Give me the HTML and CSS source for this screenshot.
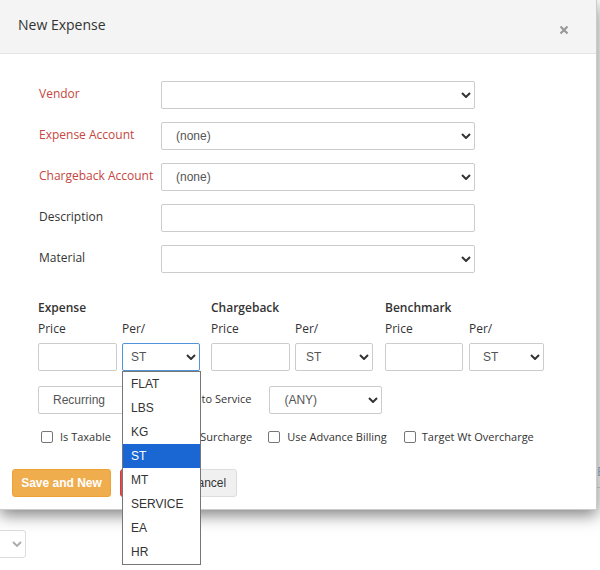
FILE: index.html
```html
<!DOCTYPE html>
<html>
<head>
<meta charset="utf-8">
<link rel="stylesheet" href="styles.css">
</head>
<body>
<div class="page">
  <div class="page-tabs">E</div>
  <div class="page-select"><svg class="chev" viewBox="0 0 10 6" width="10" height="6"><path d="M1 1l4 4 4-4" fill="none" stroke="currentColor" stroke-width="1.8"/></svg></div>
</div>

<div class="modal">
  <div class="modal-header">
    <h4 class="modal-title">New Expense</h4>
    <span class="close"><svg viewBox="0 0 10 10" width="10" height="10"><path d="M1.5 1.5l7 7M8.5 1.5l-7 7" fill="none" stroke="currentColor" stroke-width="2.2"/></svg></span>
  </div>
  <div class="modal-body">
    <div class="form-rows">
      <div class="form-row">
        <span class="form-label req">Vendor</span>
        <div class="control"><span></span><svg class="chev" viewBox="0 0 10 6" width="10" height="6"><path d="M1 1l4 4 4-4" fill="none" stroke="currentColor" stroke-width="2"/></svg></div>
      </div>
      <div class="form-row">
        <span class="form-label req">Expense Account</span>
        <div class="control"><span>(none)</span><svg class="chev" viewBox="0 0 10 6" width="10" height="6"><path d="M1 1l4 4 4-4" fill="none" stroke="currentColor" stroke-width="2"/></svg></div>
      </div>
      <div class="form-row">
        <span class="form-label req">Chargeback Account</span>
        <div class="control"><span>(none)</span><svg class="chev" viewBox="0 0 10 6" width="10" height="6"><path d="M1 1l4 4 4-4" fill="none" stroke="currentColor" stroke-width="2"/></svg></div>
      </div>
      <div class="form-row">
        <span class="form-label">Description</span>
        <div class="control"></div>
      </div>
      <div class="form-row">
        <span class="form-label">Material</span>
        <div class="control"><span></span><svg class="chev" viewBox="0 0 10 6" width="10" height="6"><path d="M1 1l4 4 4-4" fill="none" stroke="currentColor" stroke-width="2"/></svg></div>
      </div>
    </div>

    <div class="prices">
      <div class="pgroup">
        <div class="pg-head">Expense</div>
        <div class="pg-label">Price</div>
        <div class="pg-label">Per/</div>
        <div class="pg-input"></div>
        <div class="per-wrap">
          <div class="pg-select focused pad-8"><span>ST</span><svg class="chev" viewBox="0 0 10 6" width="10" height="6"><path d="M1 1l4 4 4-4" fill="none" stroke="currentColor" stroke-width="2"/></svg></div>
          <ul class="dropdown">
            <li>FLAT</li>
            <li>LBS</li>
            <li>KG</li>
            <li class="selected">ST</li>
            <li>MT</li>
            <li>SERVICE</li>
            <li>EA</li>
            <li>HR</li>
          </ul>
        </div>
      </div>
      <div class="pgroup g2">
        <div class="pg-head">Chargeback</div>
        <div class="pg-label">Price</div>
        <div class="pg-label">Per/</div>
        <div class="pg-input"></div>
        <div class="pg-select pad-10"><span>ST</span><svg class="chev" viewBox="0 0 10 6" width="10" height="6"><path d="M1 1l4 4 4-4" fill="none" stroke="currentColor" stroke-width="2"/></svg></div>
      </div>
      <div class="pgroup g3">
        <div class="pg-head">Benchmark</div>
        <div class="pg-label">Price</div>
        <div class="pg-label">Per/</div>
        <div class="pg-input"></div>
        <div class="pg-select pad-14"><span>ST</span><svg class="chev" viewBox="0 0 10 6" width="10" height="6"><path d="M1 1l4 4 4-4" fill="none" stroke="currentColor" stroke-width="2"/></svg></div>
      </div>
    </div>

    <div class="options-row">
      <div class="recurring">Recurring</div>
      <span class="apply-label">Apply to Service</span>
      <div class="any-select"><span>(ANY)</span><svg class="chev" viewBox="0 0 10 6" width="10" height="6"><path d="M1 1l4 4 4-4" fill="none" stroke="currentColor" stroke-width="2"/></svg></div>
    </div>

    <div class="checks-row">
      <label class="check c1"><span class="box"></span><span>Is Taxable</span></label>
      <label class="check c2"><span class="box"></span><span>Fuel Surcharge</span></label>
      <label class="check c3"><span class="box"></span><span>Use Advance Billing</span></label>
      <label class="check c4"><span class="box"></span><span>Target Wt Overcharge</span></label>
    </div>
  </div>
  <div class="modal-footer">
    <button class="btn btn-warning">Save and New</button>
    <button class="btn btn-danger">Save</button>
    <button class="btn btn-default">Cancel</button>
  </div>
</div>
</body>
</html>
```

FILE: styles.css
```css
* { box-sizing: border-box; }
html, body {
  margin: 0;
  height: 100%;
  overflow: hidden;
  background: #fff;
  font-family: "Open Sans", "Liberation Sans", sans-serif;
  color: #333;
}

/* page content behind the modal */
.page { padding-top: 463px; }
.page-tabs {
  height: 25px;
  border-bottom: 1px solid #ddd;
  padding-left: 597px;
  font-size: 13px;
  line-height: 16px;
  color: #8fb3db;
  white-space: nowrap;
}
.page-select {
  margin-top: 42px;
  margin-left: -20px;
  width: 46px;
  height: 28px;
  border: 1px solid #ddd;
  border-radius: 3px;
  display: flex;
  align-items: center;
  justify-content: flex-end;
  padding-right: 3px;
}
.page-select .chev { color: #aaa; }

/* modal */
.modal {
  position: absolute;
  left: 0;
  top: 0;
  width: 597px;
  height: 510px;
  background: #fff;
  border-right: 1px solid rgba(0,0,0,.2);
  border-bottom: 1px solid rgba(0,0,0,.2);
  box-shadow: 0 5px 15px rgba(0,0,0,.5);
}
.modal-header {
  height: 54px;
  background: #f4f4f4;
  border-bottom: 1px solid #e5e5e5;
  display: flex;
  align-items: center;
  padding-left: 18px;
}
.modal-title {
  flex: 1;
  margin: -4px 0 0 0;
  font-size: 14px;
  font-weight: 400;
  line-height: 20px;
  color: #333;
}
.close {
  display: flex;
  color: #999;
  margin: 7px 27px 0 0;
}

.modal-body { padding-top: 27px; }

.form-row {
  display: flex;
  align-items: center;
  height: 28px;
  margin-bottom: 13px;
}
.form-row:last-child { margin-bottom: 0; }
.form-label {
  width: 161px;
  padding-left: 39px;
  font-size: 12px;
  line-height: 16px;
  margin-top: -3px;
}
.form-label.req { color: #c54640; }

.control, .pg-select, .any-select, .pg-input, .recurring {
  height: 28px;
  border: 1px solid #ccc;
  border-radius: 2px;
  background: #fff;
  font-family: "Liberation Sans", Arial, sans-serif;
  font-size: 12px;
  color: #555;
}
.control, .pg-select, .any-select {
  display: flex;
  align-items: center;
  justify-content: space-between;
  padding: 0 3px 0 14px;
}
.control { width: 314px; }
.chev { color: #333; flex: none; }

/* prices */
.prices {
  display: flex;
  padding-left: 38px;
  margin-top: 27px;
}
.pgroup {
  display: grid;
  grid-template-columns: 79px 78px;
  column-gap: 5px;
}
.pgroup.g2 { margin-left: 11px; }
.pgroup.g3 { margin-left: 12px; grid-template-columns: 78px 75px; column-gap: 6px; }
.pg-head {
  grid-column: 1 / 3;
  font-size: 12px;
  font-weight: 600;
  line-height: 16px;
}
.pg-label {
  font-size: 12px;
  line-height: 16px;
  margin-top: 5px;
}
.pg-input, .per-wrap, .pgroup > .pg-select { margin-top: 6px; }
.per-wrap { position: relative; }
.pg-select.pad-8 { padding-left: 8px; }
.pg-select.pad-10 { padding-left: 10px; }
.pg-select.pad-14 { padding-left: 13px; }
.pg-select.focused { border-color: #5094da; }

.dropdown {
  position: absolute;
  top: 100%;
  left: 0;
  width: 79px;
  margin: 0;
  padding: 0;
  list-style: none;
  background: #fff;
  border: 1px solid #767676;
  z-index: 5;
}
.dropdown li {
  height: 24px;
  line-height: 24px;
  padding-left: 8px;
  font-family: "Liberation Sans", Arial, sans-serif;
  font-size: 12px;
  color: #333;
}
.dropdown li.selected {
  background: #1a66d2;
  color: #fff;
}

/* options */
.options-row {
  display: flex;
  align-items: center;
  padding-left: 38px;
  margin-top: 15px;
}
.recurring {
  width: 122px;
  display: flex;
  align-items: center;
  padding-left: 14px;
}
.apply-label {
  margin-left: 10px;
  font-size: 11px;
  line-height: 16px;
  margin-top: -2px;
}
.any-select {
  width: 113px;
  margin-left: 18px;
}

/* checkboxes */
.checks-row {
  display: flex;
  align-items: center;
  padding-left: 41px;
  margin-top: 15px;
  height: 16px;
}
.check {
  display: flex;
  align-items: center;
  font-size: 11px;
  line-height: 16px;
  white-space: nowrap;
}
.box {
  width: 12px;
  height: 12px;
  border: 1px solid #767676;
  border-radius: 2px;
  background: #fff;
  margin-right: 7px;
  margin-top: -1px;
}
.c4 .box { margin-right: 6px; }
.c2 { margin-left: 46px; }
.c3 { margin-left: 16px; }
.c4 { margin-left: 17px; }

/* footer */
.modal-footer {
  display: flex;
  padding-left: 12px;
  margin-top: 24px;
}
.btn {
  height: 28px;
  padding: 0;
  border: 1px solid;
  border-radius: 3px;
  font-family: "Liberation Sans", Arial, sans-serif;
  font-size: 12px;
  text-align: center;
}
.btn-warning {
  width: 99px;
  background: #f0ad4e;
  border-color: #eea236;
  color: #fff;
  font-weight: bold;
}
.btn-danger {
  width: 51px;
  margin-left: 9px;
  background: #d9534f;
  border-color: #d43f3a;
  color: #fff;
  font-weight: bold;
}
.btn-default {
  width: 59px;
  margin-left: 7px;
  background: #f0f0f0;
  border-color: #ddd;
  color: #333;
}
```
